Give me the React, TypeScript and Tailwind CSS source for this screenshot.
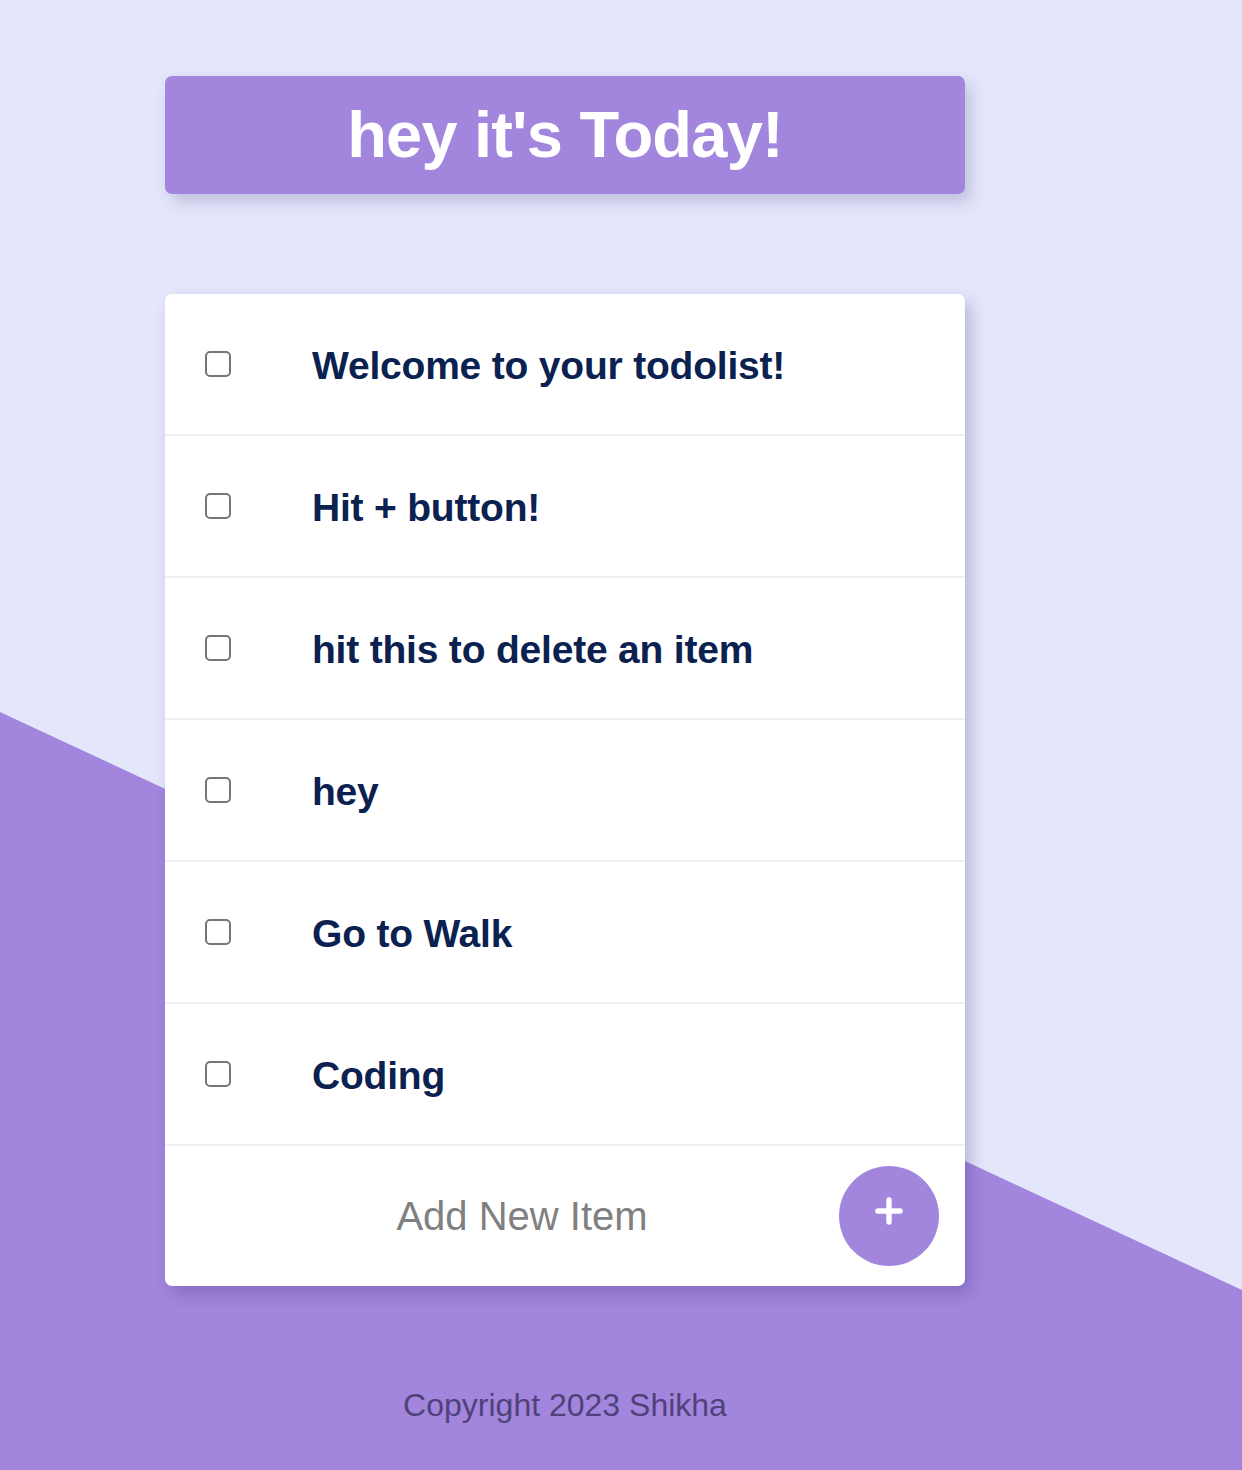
import { Plus } from "lucide-react";

const ITEMS = [
  "Welcome to your todolist!",
  "Hit + button!",
  "hit this to delete an item",
  "hey",
  "Go to Walk",
  "Coding",
];

function TodoRow({ label }: { label: string }) {
  return (
    <label className="flex h-[142px] items-center border-b-2 border-[#efeff3] pl-[40px]">
      <input
        type="checkbox"
        className="size-[26px] shrink-0 appearance-none rounded-[5px] border-2 border-[#767676] bg-white"
      />
      <span className="ml-[81px] pt-[4px] text-[39px] font-bold tracking-[-0.2px] text-[#0b2150]">{label}</span>
    </label>
  );
}

export default function App() {
  return (
    <div
      className="relative min-h-[1470px] overflow-hidden bg-[#e4e7fb]"
      style={{ fontFamily: '"Liberation Sans", Arial, Helvetica, sans-serif' }}
    >
      {/* diagonal backdrop */}
      <div className="absolute inset-0 bg-[#a286de] [clip-path:polygon(0_712px,100%_1290px,100%_100%,0_100%)]" />

      <div className="relative ml-[165px] w-[800px] pt-[76px]">
        <header className="flex h-[118px] items-center justify-center rounded-[7px] bg-[#a286de] shadow-[6px_8px_16px_rgba(60,60,120,0.22)]">
          <h1 className="text-[65px] font-bold tracking-[-0.8px] text-white">hey it's Today!</h1>
        </header>

        <div className="mt-[100px] overflow-hidden rounded-[7px] bg-white shadow-[6px_8px_16px_rgba(50,40,110,0.25)]">
          {ITEMS.map((item) => (
            <TodoRow key={item} label={item} />
          ))}
          <form className="flex h-[140px] items-center pr-[26px]" onSubmit={(e) => e.preventDefault()}>
            <input
              type="text"
              placeholder="Add New Item"
              className="min-w-0 flex-1 pl-[40px] text-center text-[40px] text-[#808080] outline-none placeholder:text-[#808080]"
            />
            <button
              type="submit"
              className="flex size-[100px] shrink-0 items-center justify-center rounded-full bg-[#a286de] text-white"
            >
              <Plus className="size-[38px] -translate-y-[5px]" strokeWidth={3.4} />
            </button>
          </form>
        </div>

        <footer className="pt-[95px] text-center text-[32px] text-[#4e4279]">Copyright 2023 Shikha</footer>
      </div>
    </div>
  );
}
